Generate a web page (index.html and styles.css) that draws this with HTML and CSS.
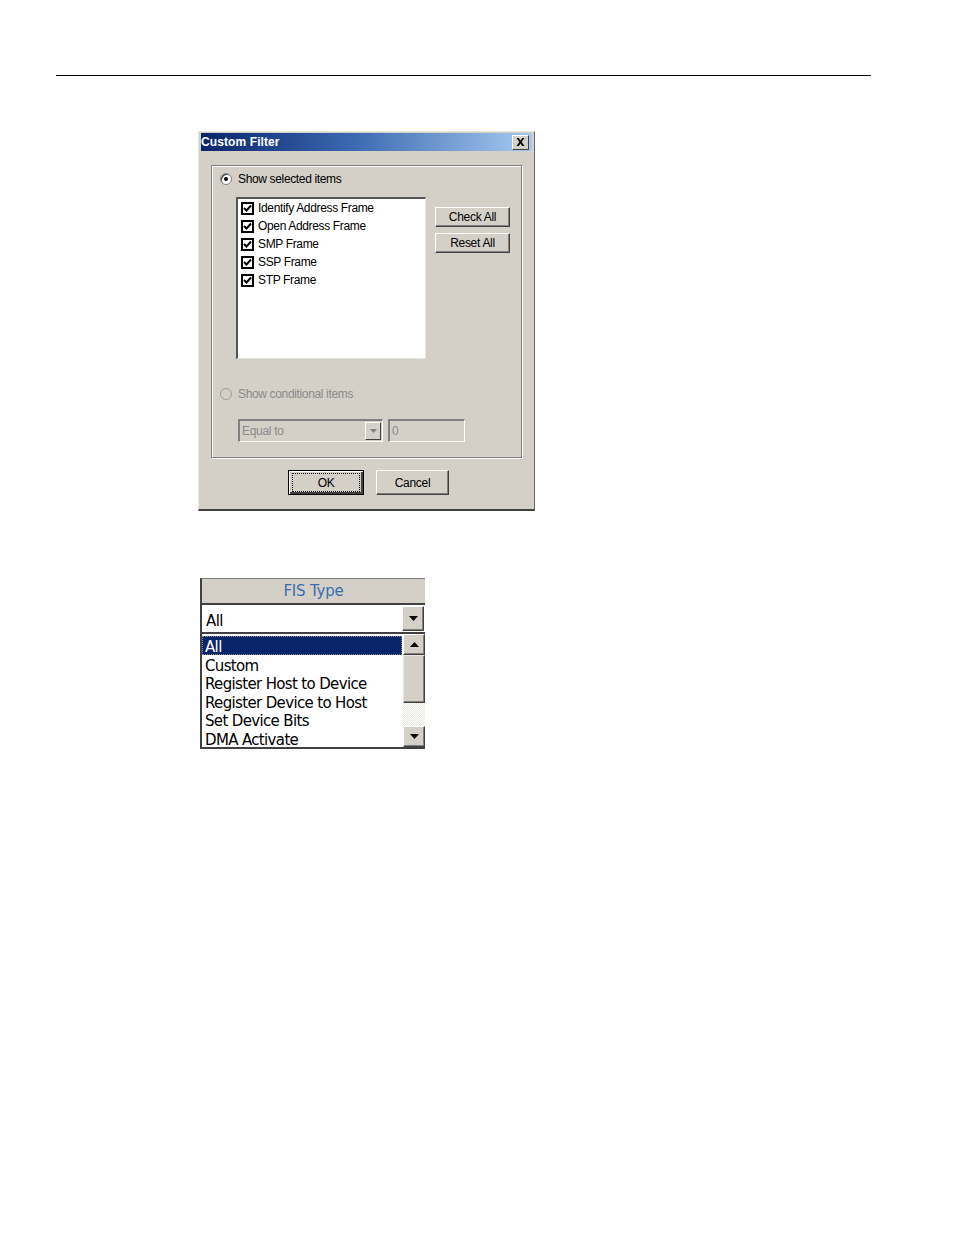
FILE: index.html
```html
<!DOCTYPE html>
<html>
<head>
<meta charset="utf-8">
<link rel="stylesheet" href="styles.css">
</head>
<body>
<div class="rule"></div>

<div class="dialog">
  <div class="titlebar">
    <span class="title">Custom Filter</span>
    <span class="close">
      <svg width="9" height="8" viewBox="0 0 9 8"><path d="M0.5 0h2.2l1.8 2.5L6.3 0h2.2L5.6 4l2.9 4H6.3L4.5 5.5 2.7 8H0.5l2.9-4z" fill="#000"/></svg>
    </span>
  </div>
  <div class="dbody">
    <div class="group">
      <div class="radio-row">
        <span class="radio on"><span class="dot"></span></span>
        <span class="lbl">Show selected items</span>
      </div>
      <div class="list-row">
        <div class="listbox">
          <div class="item"><span class="cb"><svg width="9" height="9" viewBox="0 0 9 9"><path d="M1 4l2.5 2.5L8 1.5" stroke="#000" stroke-width="2" fill="none"/></svg></span>Identify Address Frame</div>
          <div class="item"><span class="cb"><svg width="9" height="9" viewBox="0 0 9 9"><path d="M1 4l2.5 2.5L8 1.5" stroke="#000" stroke-width="2" fill="none"/></svg></span>Open Address Frame</div>
          <div class="item"><span class="cb"><svg width="9" height="9" viewBox="0 0 9 9"><path d="M1 4l2.5 2.5L8 1.5" stroke="#000" stroke-width="2" fill="none"/></svg></span>SMP Frame</div>
          <div class="item"><span class="cb"><svg width="9" height="9" viewBox="0 0 9 9"><path d="M1 4l2.5 2.5L8 1.5" stroke="#000" stroke-width="2" fill="none"/></svg></span>SSP Frame</div>
          <div class="item"><span class="cb"><svg width="9" height="9" viewBox="0 0 9 9"><path d="M1 4l2.5 2.5L8 1.5" stroke="#000" stroke-width="2" fill="none"/></svg></span>STP Frame</div>
        </div>
        <div class="side-btns">
          <div class="btn side">Check All</div>
          <div class="btn side">Reset All</div>
        </div>
      </div>
      <div class="radio-row cond">
        <span class="radio"></span>
        <span class="lbl dis">Show conditional items</span>
      </div>
      <div class="cond-row">
        <div class="combo-dis">
          <span class="cd-text">Equal to</span>
          <span class="cd-arrow"><svg width="7" height="4" viewBox="0 0 7 4"><path d="M0 0h7L3.5 4z" fill="#808080"/></svg></span>
        </div>
        <div class="field-dis">0</div>
      </div>
    </div>
    <div class="footer">
      <div class="btn foot ok"><span class="focus">OK</span></div>
      <div class="btn foot">Cancel</div>
    </div>
  </div>
</div>

<div class="fis">
  <div class="fis-head">FIS Type</div>
  <div class="fis-combo">
    <div class="fis-field">All</div>
    <div class="sbtn"><svg width="9" height="5" viewBox="0 0 9 5"><path d="M0 0h9L4.5 5z" fill="#000"/></svg></div>
  </div>
  <div class="fis-list">
    <div class="fis-items">
      <div class="fi sel">All</div>
      <div class="fi">Custom</div>
      <div class="fi">Register Host to Device</div>
      <div class="fi">Register Device to Host</div>
      <div class="fi">Set Device Bits</div>
      <div class="fi">DMA Activate</div>
    </div>
    <div class="scroll">
      <div class="sbtn sq"><svg width="9" height="5" viewBox="0 0 9 5"><path d="M0 5h9L4.5 0z" fill="#000"/></svg></div>
      <div class="thumb"></div>
      <div class="track"></div>
      <div class="sbtn sq"><svg width="9" height="5" viewBox="0 0 9 5"><path d="M0 0h9L4.5 5z" fill="#000"/></svg></div>
    </div>
  </div>
</div>
</body>
</html>
```

FILE: styles.css
```css
* { box-sizing: border-box; }
body {
  margin: 0;
  background: #fff;
  font-family: "Liberation Sans", Arial, sans-serif;
  color: #000;
}
.rule {
  margin-left: 56px;
  width: 815px;
  height: 76px;
  border-bottom: 1px solid #000;
}

/* dialog */
.dialog {
  margin: 55px 0 0 198px;
  width: 337px;
  height: 380px;
  background: #d4d0c8;
  border-top: 1px solid #e8e6e0;
  border-left: 1px solid #e8e6e0;
  border-right: 1px solid #6a6a6a;
  border-bottom: 2px solid #404040;
  padding: 1px 2px 0 2px;
}
.titlebar {
  height: 18px;
  background: linear-gradient(to right, #0a246a 0%, #3a68b0 45%, #a6caf0 100%);
  display: flex;
  align-items: center;
  justify-content: space-between;
  padding: 0 3px 0 0;
}
.title {
  color: #fff;
  font-weight: bold;
  font-size: 12px;
  letter-spacing: 0.1px;
}
.close {
  width: 17px;
  height: 15px;
  background: #d4d0c8;
  border-top: 1px solid #fff;
  border-left: 1px solid #fff;
  border-right: 1px solid #404040;
  border-bottom: 1px solid #404040;
  display: flex;
  align-items: center;
  justify-content: center;
}
.dbody {
  padding: 14px 0 0 10px;
}
.group {
  width: 311px;
  height: 293px;
  border: 1px solid #808080;
  box-shadow: inset 1px 1px 0 #fff, 1px 1px 0 #fff;
  padding: 6px 0 0 8px;
}
.radio-row {
  display: flex;
  align-items: center;
  height: 13px;
  gap: 6px;
}
.radio {
  width: 12px;
  height: 12px;
  border-radius: 50%;
  background: #fff;
  border: 1px solid #808080;
  box-shadow: inset 1px 1px 0 #404040;
  display: flex;
  align-items: center;
  justify-content: center;
}
.radio .dot {
  width: 4px;
  height: 4px;
  border-radius: 50%;
  background: #000;
}
.cond .radio {
  background: #d4d0c8;
  border-color: #a0a0a0;
  box-shadow: none;
}
.lbl {
  font-size: 12px;
  letter-spacing: -0.35px;
  color: #000;
}
.lbl.dis {
  color: #8a8a8a;
}
.list-row {
  display: flex;
  margin-top: 12px;
  padding-left: 16px;
}
.listbox {
  width: 190px;
  height: 162px;
  background: #fff;
  border-top: 2px solid #555;
  border-left: 2px solid #555;
  border-right: 1px solid #e8e6e0;
  border-bottom: 1px solid #e8e6e0;
  padding: 0 0 0 3px;
}
.item {
  display: flex;
  align-items: center;
  height: 18px;
  font-size: 12px;
  letter-spacing: -0.35px;
  gap: 4px;
}
.cb {
  width: 13px;
  height: 13px;
  border: 2px solid #000;
  display: flex;
  align-items: center;
  justify-content: center;
  background: #fff;
}
.side-btns {
  display: flex;
  flex-direction: column;
  gap: 6px;
  margin: 10px 0 0 9px;
}
.btn {
  background: #d4d0c8;
  border-top: 1px solid #fff;
  border-left: 1px solid #fff;
  border-right: 1px solid #404040;
  border-bottom: 1px solid #404040;
  box-shadow: inset -1px -1px 0 #808080;
  font-size: 12px;
  letter-spacing: -0.3px;
  display: flex;
  align-items: center;
  justify-content: center;
}
.btn.side {
  width: 75px;
  height: 20px;
}
.cond {
  margin-top: 28px;
}
.cond-row {
  display: flex;
  gap: 5px;
  margin: 19px 0 0 18px;
}
.combo-dis {
  width: 145px;
  height: 23px;
  border-top: 2px solid #808080;
  border-left: 2px solid #808080;
  border-right: 1px solid #fff;
  border-bottom: 1px solid #fff;
  display: flex;
  align-items: stretch;
  padding: 1px;
}
.cd-text {
  flex: 1;
  font-size: 12px;
  letter-spacing: -0.3px;
  color: #8a8a8a;
  display: flex;
  align-items: center;
  padding-left: 1px;
}
.cd-arrow {
  width: 16px;
  background: #d4d0c8;
  border-top: 1px solid #fff;
  border-left: 1px solid #fff;
  border-right: 1px solid #404040;
  border-bottom: 1px solid #404040;
  display: flex;
  align-items: center;
  justify-content: center;
}
.field-dis {
  width: 77px;
  height: 23px;
  border-top: 2px solid #808080;
  border-left: 2px solid #808080;
  border-right: 1px solid #fff;
  border-bottom: 1px solid #fff;
  font-size: 12px;
  color: #8a8a8a;
  display: flex;
  align-items: center;
  padding-left: 2px;
}
.footer {
  display: flex;
  gap: 12px;
  margin: 12px 0 0 77px;
}
.btn.foot {
  width: 73px;
  height: 25px;
}
.btn.ok {
  border: 1px solid #000;
  box-shadow: inset 1px 1px 0 #fff, inset -2px -2px 0 #404040;
  width: 76px;
}
.focus {
  outline: 1px dotted #000;
  width: 66px;
  height: 17px;
  display: flex;
  align-items: center;
  justify-content: center;
}

/* FIS type widget */
.fis {
  margin: 67px 0 0 200px;
  width: 225px;
  border-left: 2px solid #404040;
  border-top: 1px solid #808080;
  font-family: "DejaVu Sans", Tahoma, sans-serif;
}
.fis-head {
  height: 26px;
  background: #d4d0c8;
  border-bottom: 2px solid #404040;
  color: #3b6fae;
  font-size: 15px;
  letter-spacing: -0.2px;
  text-align: center;
  line-height: 25px;
}
.fis-combo {
  display: flex;
  height: 29px;
  background: #fff;
  border-bottom: 2px solid #404040;
  padding: 1px 1px 1px 0;
}
.fis-field {
  flex: 1;
  font-size: 15px;
  line-height: 30px;
  padding-left: 4px;
  letter-spacing: -0.6px;
}
.sbtn {
  width: 22px;
  background: #d4d0c8;
  border-top: 1px solid #fff;
  border-left: 1px solid #fff;
  border-right: 1px solid #404040;
  border-bottom: 1px solid #404040;
  box-shadow: inset -1px -1px 0 #808080;
  display: flex;
  align-items: center;
  justify-content: center;
}
.fis-list {
  display: flex;
  height: 115px;
  background: #fff;
  border-bottom: 2px solid #404040;
  overflow: hidden;
}
.fis-items {
  flex: 1;
  padding-top: 2px;
}
.fi {
  height: 18.5px;
  font-size: 15px;
  line-height: 22px;
  padding-left: 3px;
  letter-spacing: -0.65px;
  white-space: nowrap;
}
.fi.sel {
  background: #0a246a;
  color: #fff;
  line-height: 18px;
  padding-top: 2px;
  outline: 1px dotted #8a8a8a;
  outline-offset: -1px;
  margin-right: 1px;
}
.scroll {
  width: 22px;
  display: flex;
  flex-direction: column;
}
.sbtn.sq {
  height: 21px;
  flex: none;
}
.thumb {
  height: 48px;
  background: #d4d0c8;
  border-top: 1px solid #e8e6e0;
  border-left: 1px solid #e8e6e0;
  border-right: 1px solid #404040;
  border-bottom: 1px solid #404040;
  box-shadow: inset -1px -1px 0 #808080;
}
.track {
  flex: 1;
  background: repeating-conic-gradient(#e8e6e0 0 25%, #fff 0 50%) 0 0 / 2px 2px;
}
```
